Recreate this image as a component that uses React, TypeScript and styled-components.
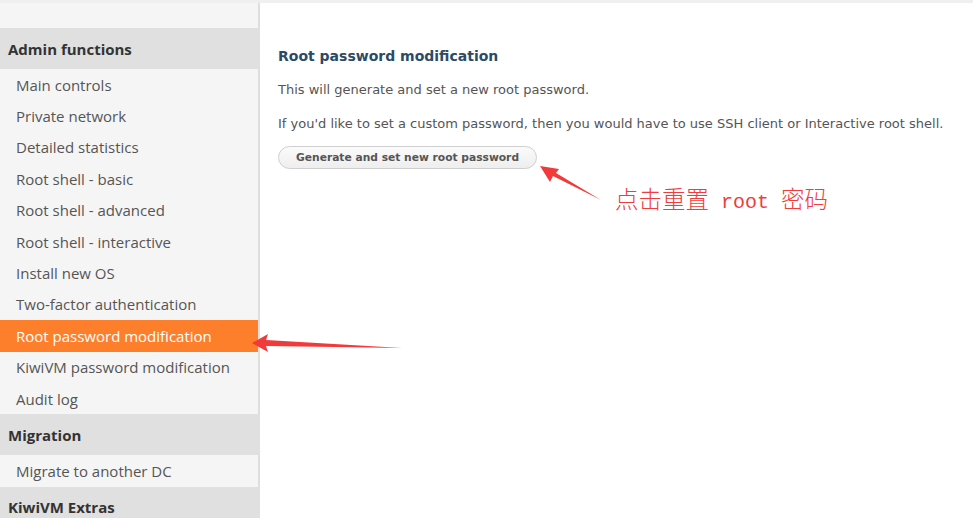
import React from "react";
import styled, { createGlobalStyle } from "styled-components";

const Global = createGlobalStyle`
  html, body { margin: 0; padding: 0; background: #fff; }
  body { width: 973px; height: 518px; overflow: hidden; }
`;

const Page = styled.div`
  position: relative;
  width: 973px;
  height: 518px;
  overflow: hidden;
  border-top: 3px solid #efefef;
  box-sizing: border-box;
  display: flex;
`;

const Sidebar = styled.nav`
  width: 258px;
  flex: 0 0 258px;
  background: #f5f5f5;
  border-right: 2px solid #dedede;
  padding-top: 25px;
  display: flex;
  flex-direction: column;
  font-family: "Open Sans", "Noto Sans", sans-serif;
`;

const GroupHeader = styled.div`
  flex: 0 0 41px;
  height: 41px;
  display: flex;
  align-items: center;
  padding-left: 8px;
  background: #e0e0e0;
  margin-right: -2px;
  font-size: 15px;
  font-weight: 700;
  color: #333;
`;

const Item = styled.div<{ $active?: boolean }>`
  flex: 0 0 31.4px;
  height: 31.4px;
  display: flex;
  align-items: center;
  padding-left: 16px;
  font-size: 15px;
  color: ${(p) => (p.$active ? "#fff" : "#555")};
  background: ${(p) => (p.$active ? "#fd7f2c" : "transparent")};
`;

const Main = styled.main`
  flex: 1;
  padding: 41px 0 0 18px;
  font-family: Verdana, "DejaVu Sans", sans-serif;
`;

const Title = styled.h2`
  margin: 0 0 12px;
  font-size: 14px;
  font-weight: 700;
  color: #2b4a66;
  line-height: 24px;
`;

const Para = styled.p`
  margin: 0 0 14px;
  font-size: 13px;
  line-height: 20px;
  color: #555;
`;

const Button = styled.button`
  display: block;
  margin-top: -2px;
  height: 23px;
  padding: 0 17px;
  border: 1px solid #cfcfcf;
  border-radius: 12px;
  background: linear-gradient(#fbfbfb, #eeeeee);
  font-family: Verdana, "DejaVu Sans", sans-serif;
  font-size: 10.7px;
  font-weight: 700;
  color: #555;
`;

const Note = styled.div`
  position: absolute;
  left: 615px;
  top: 179px;
  font-family: "Liberation Mono", "Noto Sans CJK SC", monospace;
  font-size: 20px;
  color: #f23b3b;
  white-space: pre;
  line-height: 32px;
`;

const Cjk = styled.span`
  font-family: "Noto Sans CJK SC", sans-serif;
  font-size: 23.5px;
  font-weight: 300;
`;

const Overlay = styled.svg`
  position: absolute;
  left: 0;
  top: 0;
  pointer-events: none;
`;

const items1 = [
  "Main controls",
  "Private network",
  "Detailed statistics",
  "Root shell - basic",
  "Root shell - advanced",
  "Root shell - interactive",
  "Install new OS",
  "Two-factor authentication",
  "Root password modification",
  "KiwiVM password modification",
  "Audit log",
];

export default function App() {
  return (
    <>
      <Global />
      <Page>
        <Sidebar>
          <GroupHeader>Admin functions</GroupHeader>
          {items1.map((t) => (
            <Item key={t} $active={t === "Root password modification"}>
              {t}
            </Item>
          ))}
          <GroupHeader>Migration</GroupHeader>
          <Item>Migrate to another DC</Item>
          <GroupHeader>KiwiVM Extras</GroupHeader>
        </Sidebar>
        <Main>
          <Title>Root password modification</Title>
          <Para>This will generate and set a new root password.</Para>
          <Para>
            If you'd like to set a custom password, then you would have to use SSH client or
            Interactive root shell.
          </Para>
          <Button>Generate and set new root password</Button>
        </Main>
        <Note>
          <Cjk>点击重置</Cjk> root <Cjk>密码</Cjk>
        </Note>
        <Overlay width="973" height="518" viewBox="0 0 973 518">
          <polygon
            points="540,163 559,166 556,170 601,197 553,173 550,179"
            fill="#f23a3a"
          />
          <polygon
            points="252,340 268,331 266,337 402,345 266,343 268,349"
            fill="#f23a3a"
          />
        </Overlay>
      </Page>
    </>
  );
}
